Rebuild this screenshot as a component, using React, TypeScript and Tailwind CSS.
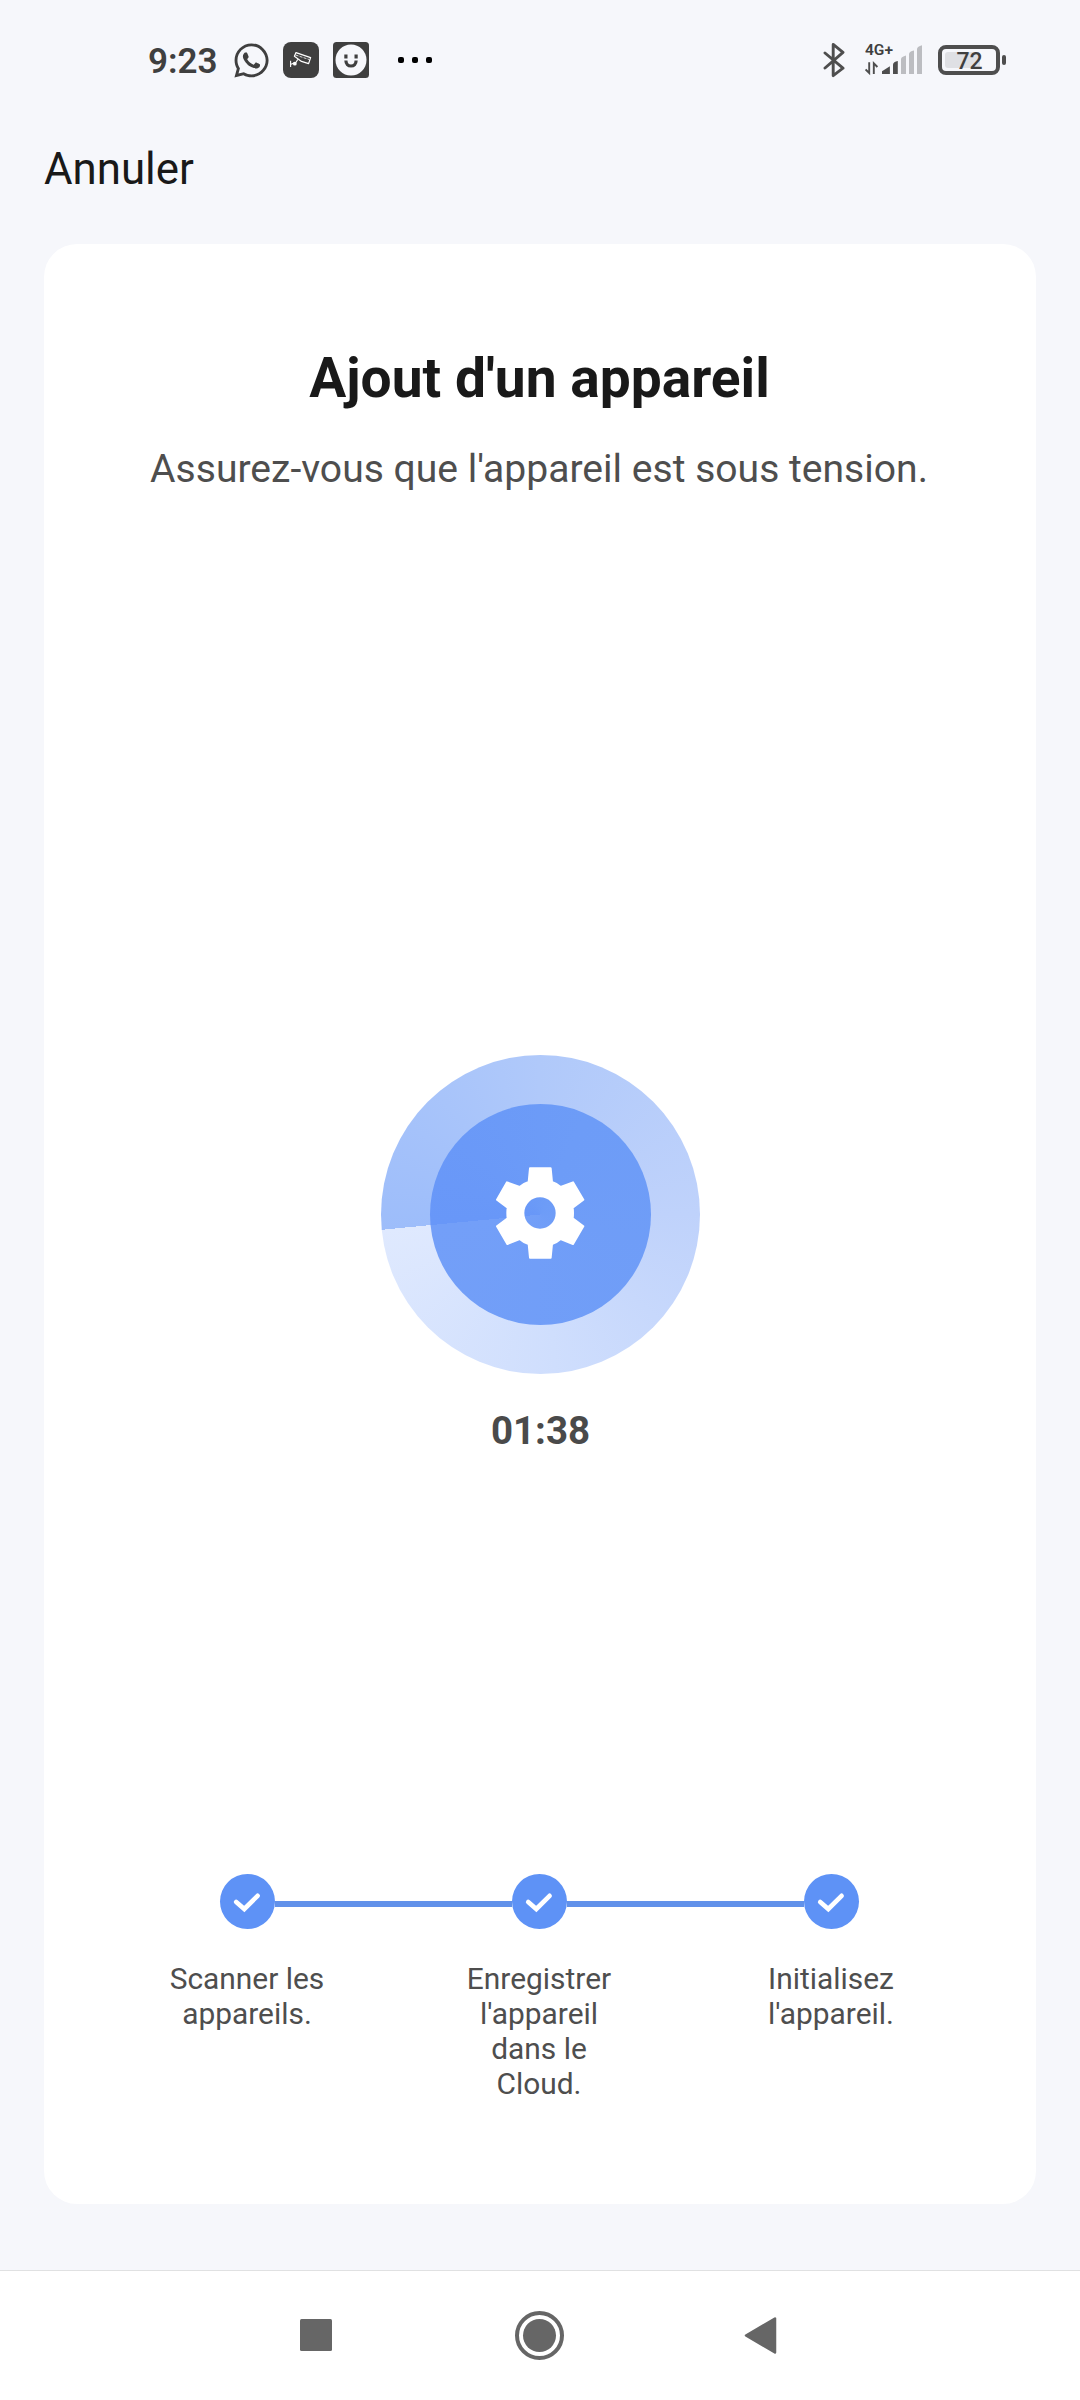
import { FaWhatsapp } from 'react-icons/fa';

interface Step {
    label: string;
    done: boolean;
}

const STEPS: Step[] = [
    { label: 'Scanner les appareils.', done: true },
    { label: "Enregistrer l'appareil dans le Cloud.", done: true },
    { label: "Initialisez l'appareil.", done: true },
];

function CameraTile() {
    return (
        <svg className="w-9 h-9" viewBox="0 0 36 36" fill="none">
            <rect width="36" height="36" rx="8" fill="#3f3f3f" />
            <path d="M13 10.6 27.6 15.6 25.6 21.6 18.5 19.4 11.4 14.2Z" stroke="#fff" strokeWidth="1.2" strokeLinejoin="round" />
            <path d="M12.6 13 26.4 17.6" stroke="#fff" strokeWidth="0.8" strokeDasharray="3 1.2" />
            <path d="M14.8 17.4 13 20.3 8 22.3M7.6 18.8V25" stroke="#fff" strokeWidth="1.1" />
            <circle cx="11.8" cy="21.7" r="1.9" fill="#fff" />
        </svg>
    );
}

function SmileyTile() {
    return (
        <svg className="w-9 h-9" viewBox="0 0 36 36" fill="none">
            <rect width="36" height="36" rx="3.5" fill="#3f3f3f" />
            <circle cx="18" cy="18" r="15.5" fill="#f6f7fb" />
            <path d="M11.3 12.5h3.2v4h-3.2zM21.5 12.5h3.2v4h-3.2z" fill="#3f3f3f" />
            <path d="M12.9 18.4c0 3.6 2.2 5.6 5.1 5.6s5.1-2 5.1-5.6" stroke="#3f3f3f" strokeWidth="3.2" />
        </svg>
    );
}

function BluetoothIcon() {
    return (
        <svg className="w-[22px] h-[36px]" viewBox="0 0 22 36" fill="none" stroke="#4e4e4e" strokeWidth="2.9" strokeLinejoin="round" strokeLinecap="round">
            <path d="M2 11 20 26.2 10.2 33.6V2.4L20 10.3 2 26" />
        </svg>
    );
}

function SignalIcon() {
    return (
        <svg className="w-[58px] h-[36px]" viewBox="0 0 58 36">
            <text x="0" y="13" fontFamily="Roboto, sans-serif" fontSize="15.5" fontWeight="600" fill="#3f3f3f" textLength="28" lengthAdjust="spacingAndGlyphs">4G+</text>
            <path d="M4.2 20.2V31L0.6 27.4M8.8 32V21.4L12.4 25" fill="none" stroke="#4e4e4e" strokeWidth="1.9" />
            <path d="M17 29.3 24.9 24.2V32H17Z" fill="#4e4e4e" />
            <path d="M28 22.2Q28.4 20 32.8 19V32H28Z" fill="#4e4e4e" />
            <path d="M36 17Q36.4 14.8 41 13.6V32H36ZM44 12Q44.4 9.6 49 8.6V32H44ZM52 7Q52.4 4.4 57 3.2V32H52Z" fill="#bcbdc1" />
        </svg>
    );
}

function Battery({ level }: { level: number }) {
    return (
        <div className="flex items-center gap-[2px]">
            <div className="relative w-[62px] h-[30px] rounded-[8px] border-4 border-[#4e4e4e] p-[3px]">
                <div className="h-full rounded-[3px] bg-[#dfe0e4]" style={{ width: `${level}%` }} />
                <span className="absolute inset-0 flex items-center justify-center pl-[1px] pt-[2px] text-[23px] leading-none font-medium text-[#3f3f3f]">{level}</span>
            </div>
            <div className="w-1 h-[10px] rounded-[2px] bg-[#4e4e4e]" />
        </div>
    );
}

function StatusBar() {
    return (
        <header className="flex items-center justify-between h-[120px] pl-[148px] pr-[74px]">
            <div className="flex items-center">
                <span className="w-[84px] pt-[2px] text-[35px] leading-none font-semibold text-[#3f3f3f]">9:23</span>
                <FaWhatsapp className="w-[39px] h-[39px] mr-[12px] text-[#3f3f3f]" />
                <CameraTile />
                <span className="w-[14px]" />
                <SmileyTile />
                <div className="flex gap-2 ml-[29px]">
                    <i className="w-[6px] h-[6px] rounded-[2px] bg-black" />
                    <i className="w-[6px] h-[6px] rounded-[2px] bg-black" />
                    <i className="w-[6px] h-[6px] rounded-[2px] bg-black" />
                </div>
            </div>
            <div className="flex items-center">
                <BluetoothIcon />
                <span className="w-5" />
                <SignalIcon />
                <span className="w-[15px]" />
                <Battery level={72} />
            </div>
        </header>
    );
}

function GearIcon() {
    return (
        <svg className="w-[90px] h-[94px] mb-[3px]" viewBox="406 408 270 282">
            <path
                fillRule="evenodd"
                fill="#fff"
                stroke="#fff"
                strokeWidth="6"
                strokeLinejoin="round"
                d="M511 415H573L577 456Q592 461 603 471L640 457 671 509 639 533Q641 549 639 565L671 589 640 642 603 627Q592 637 577 642L573 683H511L507 642Q491 637 480 627L443 642 412 589 444 565Q442 549 444 533L412 509 442 457 480 471Q491 461 507 456ZM541 499A50 50 0 1 0 541 599A50 50 0 1 0 541 499Z"
            />
        </svg>
    );
}

function Radar() {
    return (
        <div className="flex items-center justify-center w-[319px] h-[319px] rounded-full bg-[conic-gradient(from_264.5deg,#9dbdfa,#b0c9fa_95deg,#bfd2fb_185deg,#cfdefd_270deg,#dfe9fe)]">
            <div className="flex items-center justify-center w-[221px] h-[221px] rounded-full bg-[conic-gradient(from_264.5deg,#6897f8,#6d9cf7_120deg,#739ff8)]">
                <GearIcon />
            </div>
        </div>
    );
}

function StepDot() {
    return (
        <div className="flex items-center justify-center w-[55px] h-[55px] rounded-full bg-[#5e92f6]">
            <svg className="w-[30px] h-[24px]" viewBox="0 0 30 24" fill="none" stroke="#fff" strokeWidth="4.6" strokeLinecap="round">
                <path d="M4.2 12 12.3 19 25.6 5.8" />
            </svg>
        </div>
    );
}

export default function App() {
    return (
        <div className="flex flex-col w-[1080px] h-[2400px] bg-[#f6f7fb] font-['Roboto',sans-serif]">
            <StatusBar />

            {/* Top bar */}
            <div className="flex items-center h-[124px] px-[44px] pb-[24px]">
                <button className="text-[43.8px] leading-none text-[#191919]">Annuler</button>
            </div>

            {/* Card */}
            <main className="flex flex-col items-center w-[992px] h-[1960px] mx-auto rounded-[33px] bg-white">
                <h1 className="mt-[102px] mr-[1px] text-[55.1px] leading-[64px] font-bold text-[#191919]">Ajout d'un appareil</h1>
                <p className="mt-[36px] mr-[2px] text-[39.1px] leading-[46px] text-[#4e4e4e]">Assurez-vous que l'appareil est sous tension.</p>

                <div className="flex flex-col items-center mt-[563px]">
                    <Radar />
                    <div className="mt-[34px] pl-[1px] text-[38.5px] leading-[46px] font-bold text-[#4a4a4a]">01:38</div>
                </div>

                <ol className="flex mt-[420px] mr-[2px]">
                    {STEPS.map((s, i) => (
                        <li key={s.label} className="flex flex-col items-center w-[292px]">
                            <div className="flex items-center w-full">
                                <span className={i === 0 ? 'flex-1' : 'flex-1 h-[6px] mt-[5px] bg-[#6191ea]'} />
                                {s.done && <StepDot />}
                                <span className={i === STEPS.length - 1 ? 'flex-1' : 'flex-1 h-[6px] mt-[5px] bg-[#6191ea]'} />
                            </div>
                            <span className="w-[165px] mt-[32px] text-center text-[29.9px] leading-[35px] text-[#4e4e4e]">{s.label}</span>
                        </li>
                    ))}
                </ol>
            </main>

            {/* System navigation */}
            <nav className="flex items-center justify-center h-[130px] mt-auto pb-[1px] border-t border-[#e0e1e2] bg-white">
                <svg className="w-[480px] h-[50px]" viewBox="300 2310 480 50" fill="#666">
                    <rect x="300" y="2319" width="32" height="32" rx="1.5" />
                    <circle cx="539.5" cy="2335.5" r="22.5" fill="none" stroke="#666" strokeWidth="4" />
                    <circle cx="539.5" cy="2335.5" r="16.5" />
                    <path d="M746 2335.5 775 2318.5V2352.5Z" stroke="#666" strokeWidth="2.5" strokeLinejoin="round" />
                </svg>
            </nav>
        </div>
    );
}
